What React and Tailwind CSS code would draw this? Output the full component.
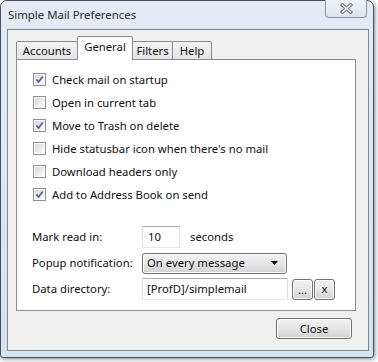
import React from "react";

function Check({ checked }) {
  return (
    <div className="w-[13px] h-[13px] border border-[#8e8f8f] bg-white p-px shrink-0">
      <div className="w-full h-full bg-gradient-to-br from-[#d6d8dc] to-[#fbfbfb] relative">
        {checked && (
          <svg width="11" height="11" viewBox="0 0 11 11" className="absolute -left-px -top-px">
            <path d="M2.5 5.5 L4.6 8 L8.8 2.6" fill="none" stroke="#4b5f94" strokeWidth="1.7" />
          </svg>
        )}
      </div>
    </div>
  );
}

function Row({ checked, label }) {
  return (
    <div className="h-[23px] flex items-center gap-[6px]">
      <Check checked={checked} />
      <span>{label}</span>
    </div>
  );
}

const btn =
  "border border-[#707070] rounded-[3px] bg-gradient-to-b from-[#f2f2f2] via-[#e6e6e6] to-[#d2d2d2] shadow-[inset_0_0_0_1px_#fcfcfc] flex items-center";

export default function App() {
  return (
    <div className="w-[378px] h-[362px] bg-white font-['Noto_Sans',sans-serif] text-[11.3px] text-[#111] leading-none">
      <div className="w-[374px] h-[358px] rounded-t-[7px] rounded-b-[3px] border border-[#4a5058] bg-gradient-to-b from-[#e3ecf6] to-[#d6e2ef] shadow-[1px_1px_4px_rgba(0,0,0,0.5)] flex flex-col">
        <div className="h-[28px] flex justify-between pl-[7px] pr-[6px] shrink-0">
          <span className="text-[11.4px] text-[#2a2a2a] pt-[8px]">Simple Mail Preferences</span>
          <div className="w-[42px] h-[18px] -mt-px border border-t-0 border-[#8c96a2] rounded-b-[4px] bg-gradient-to-b from-[#eef3f9] to-[#dbe4ee] flex items-center justify-center">
            <svg width="13" height="11" viewBox="0 0 13 11">
              <path d="M2.5 2 L10.5 9 M10.5 2 L2.5 9" stroke="#6d737a" strokeWidth="3.6" strokeLinecap="square" />
              <path d="M2.5 2 L10.5 9 M10.5 2 L2.5 9" stroke="#f4f4f4" strokeWidth="1.6" strokeLinecap="square" />
            </svg>
          </div>
        </div>
        <div className="ml-[6px] mr-[4px] mb-[6px] flex-1 border border-[#7f8a96] bg-[#f0f0f0] flex flex-col">
          <div className="pl-[8px] pt-[6px] flex items-end h-[29px] shrink-0">
            <div className="w-[62px] h-[18px] border border-b-0 border-[#898c95] rounded-t-[2px] bg-gradient-to-b from-[#f4f4f4] to-[#e4e4e4] flex items-center justify-center pt-px">Accounts</div>
            <div className="w-[56px] h-[24px] -ml-px -mb-px border border-b-0 border-[#898c95] rounded-t-[2px] bg-white relative z-10 flex items-center justify-center pb-[3px]">General</div>
            <div className="w-[41px] h-[18px] -ml-px border border-b-0 border-[#898c95] rounded-t-[2px] bg-gradient-to-b from-[#f4f4f4] to-[#e4e4e4] flex items-center justify-center pt-px">Filters</div>
            <div className="w-[40px] h-[18px] -ml-px border border-b-0 border-[#898c95] rounded-t-[2px] bg-gradient-to-b from-[#f4f4f4] to-[#e4e4e4] flex items-center justify-center pt-px">Help</div>
          </div>
          <div className="ml-[8px] mr-[12px] h-[252px] border border-[#898c95] bg-white pl-[16px] pt-[8px] flex flex-col">
            <Row checked label="Check mail on startup" />
            <Row label="Open in current tab" />
            <Row checked label="Move to Trash on delete" />
            <Row label="Hide statusbar icon when there's no mail" />
            <Row label="Download headers only" />
            <Row checked label="Add to Address Book on send" />
            <div className="mt-[20px] flex flex-col gap-[4px] -ml-px">
              <div className="h-[22px] flex items-center">
                <span className="w-[110px]">Mark read in:</span>
                <div className="w-[38px] h-[22px] border border-[#abadb3] border-l-[#e2e3ea] border-r-[#dbdfe6] border-b-[#e3e9ef] bg-white flex items-center pl-[5px]">10</div>
                <span className="ml-[10px]">seconds</span>
              </div>
              <div className="h-[22px] flex items-center">
                <span className="w-[110px]">Popup notification:</span>
                <div className={btn + " w-[145px] h-[21px] justify-between pl-[4px] pr-[8px]"}>
                  <span>On every message</span>
                  <svg width="7" height="4" viewBox="0 0 7 4"><path d="M0 0 H7 L3.5 4 Z" fill="#000" /></svg>
                </div>
              </div>
              <div className="h-[22px] flex items-center">
                <span className="w-[110px]">Data directory:</span>
                <div className="w-[146px] h-[22px] border border-[#abadb3] border-l-[#e2e3ea] border-r-[#dbdfe6] border-b-[#e3e9ef] bg-white flex items-center pl-[4px]">[ProfD]/simplemail</div>
                <div className={btn + " ml-[4px] w-[21px] h-[21px] justify-center pt-[2px]"}>...</div>
                <div className={btn + " ml-px w-[21px] h-[21px] justify-center"}>x</div>
              </div>
            </div>
          </div>
          <div className="flex justify-end pr-[16px] pt-[7px]">
            <div className={btn + " w-[76px] h-[21px] justify-center"}>Close</div>
          </div>
        </div>
      </div>
    </div>
  );
}
